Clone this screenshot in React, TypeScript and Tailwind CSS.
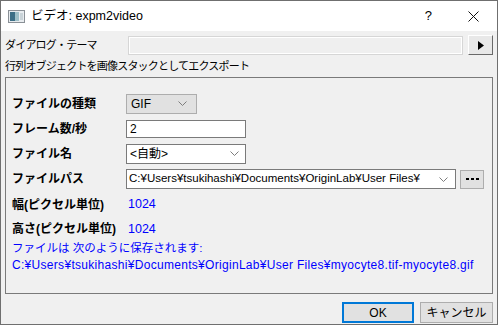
import React from 'react'

const font = { fontFamily: '"Liberation Sans", "Noto Sans CJK JP", sans-serif' }

function Chevron() {
  return (
    <svg width="9" height="5" viewBox="0 0 9 5" className="shrink-0">
      <path d="M0.5 0.5 L4.5 4.5 L8.5 0.5" fill="none" stroke="#7d7d7d" strokeWidth="1" />
    </svg>
  )
}

function Row({ label, h, children }: { label: string; h: string; children?: React.ReactNode }) {
  return (
    <div className={`flex items-center ${h}`}>
      <div className="w-[114px] text-[12px] font-bold text-black">{label}</div>
      {children}
    </div>
  )
}

export default function App() {
  return (
    <div
      className="w-[498px] h-[325px] border border-[#6f6f6f] bg-[#f0f0f0] flex flex-col text-[12px] text-black overflow-hidden"
      style={font}
    >
      {/* title bar */}
      <div className="h-[30px] bg-white flex items-center pl-[7px] shrink-0">
        <svg width="17" height="13" viewBox="0 0 17 13">
          <rect x="0.5" y="0.5" width="16" height="12" fill="#e8ecef" stroke="#8a9096" />
          <rect x="2" y="2" width="5" height="9" fill="#3d6f86" />
          <rect x="7" y="2" width="4" height="9" fill="#9fc0c8" />
          <rect x="12" y="3" width="3" height="7" fill="#c9d3d8" />
        </svg>
        <span className="ml-[6px] text-[12.5px]">ビデオ: expm2video</span>
        <span className="ml-auto text-[13px] mr-[36px]">?</span>
        <svg width="11" height="11" viewBox="0 0 11 11" className="mr-[18px]">
          <path d="M0.5 0.5 L10.5 10.5 M10.5 0.5 L0.5 10.5" stroke="#111" strokeWidth="1" />
        </svg>
      </div>

      {/* body */}
      <div className="flex-1 flex flex-col px-[4px]">
        <div className="mt-[4px] h-[20px] flex items-center">
          <div className="w-[123px] text-[11px] tracking-[-0.8px]">ダイアログ・テーマ</div>
          <div className="w-[335px] h-[19px] border border-[#d6d6d6] bg-[#efefef] shadow-[inset_1px_1px_0_#ffffff,inset_-1px_-1px_0_#ffffff]" />
          <div className="ml-[5px] w-[25px] h-[20px] bg-[#e8e8e8] border-t border-l border-white border-r border-b border-r-[#696969] border-b-[#696969] flex items-center justify-center">
            <svg width="6" height="9" viewBox="0 0 6 9">
              <path d="M0 0 L6 4.5 L0 9 Z" fill="#000" />
            </svg>
          </div>
        </div>
        <div className="mt-[3px] h-[16px] flex items-center text-[11px] tracking-[-0.8px]">
          行列オブジェクトを画像スタックとしてエクスポート
        </div>

        {/* group box */}
        <div className="mt-[3px] w-[488px] h-[217px] border border-[#7a7a7a] pt-[13px] pl-[6px] flex flex-col">
          <Row label="ファイルの種類" h="h-[25px]">
            <div className="w-[71px] h-[20px] bg-[#e1e1e1] border border-[#adadad] flex items-center pl-[4px] pr-[9px] justify-between">
              <span>GIF</span>
              <Chevron />
            </div>
          </Row>
          <Row label="フレーム数/秒" h="h-[25px]">
            <div className="w-[120px] h-[18px] bg-white border border-[#7a7a7a] flex items-center pl-[3px]">2</div>
          </Row>
          <Row label="ファイル名" h="h-[25px]">
            <div className="w-[120px] h-[20px] bg-white border border-[#7a7a7a] flex items-center pl-[3px] pr-[6px] justify-between">
              <span>&lt;自動&gt;</span>
              <Chevron />
            </div>
          </Row>
          <Row label="ファイルパス" h="h-[26px]">
            <div className="w-[330px] h-[20px] bg-white border border-[#7a7a7a] flex items-center pl-[2px] pr-[7px] justify-between">
              <span className="text-[11.5px] tracking-[0px]">C:¥Users¥tsukihashi¥Documents¥OriginLab¥User Files¥</span>
              <Chevron />
            </div>
            <div className="ml-[4px] w-[24px] h-[19px] bg-[#e1e1e1] border border-[#adadad] flex items-center justify-center gap-[2px]">
              <span className="w-[3px] h-[2px] bg-black" />
              <span className="w-[3px] h-[2px] bg-black" />
              <span className="w-[3px] h-[2px] bg-black" />
            </div>
          </Row>
          <Row label="幅(ピクセル単位)" h="h-[25px]">
            <span className="pl-[2px] text-[#0000ff] text-[12.5px]">1024</span>
          </Row>
          <Row label="高さ(ピクセル単位)" h="h-[24px]">
            <span className="pl-[2px] text-[#0000ff] text-[12.5px]">1024</span>
          </Row>
          <div className="h-[16px] flex items-center text-[#0000ff] text-[11.5px] tracking-[0px]">
            ファイルは 次のように保存されます:
          </div>
          <div className="h-[16px] flex items-center text-[#0000ff] text-[12px] tracking-[0.3px]">
            C:¥Users¥tsukihashi¥Documents¥OriginLab¥User Files¥myocyte8.tif-myocyte8.gif
          </div>
        </div>

        {/* buttons */}
        <div className="mt-[8px] flex justify-end gap-[6px]">
          <div className="w-[72px] h-[21px] bg-[#e1e1e1] border-2 border-[#0078d7] flex items-center justify-center">OK</div>
          <div className="w-[73px] h-[21px] bg-[#e1e1e1] border border-[#adadad] flex items-center justify-center">キャンセル</div>
        </div>
      </div>
    </div>
  )
}
